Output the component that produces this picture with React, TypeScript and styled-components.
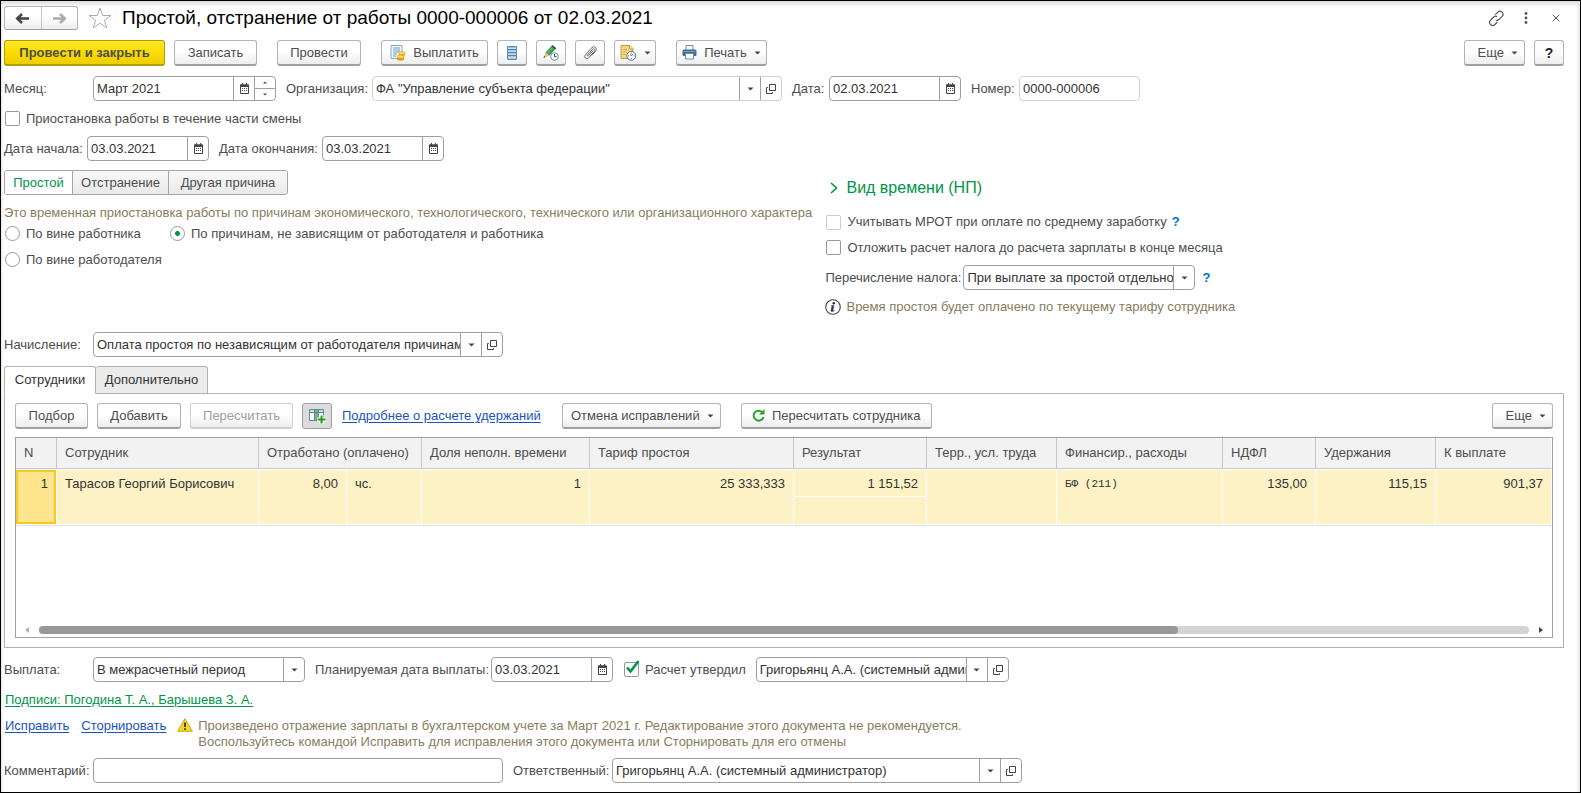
import React from "react";
import styled, { createGlobalStyle, css } from "styled-components";

const GlobalStyle = createGlobalStyle`
  * { box-sizing: border-box; }
  body { margin: 0; background: #fff; }
  body, button, input, select {
    font-family: "Liberation Sans", Arial, sans-serif;
    font-size: 13px;
    line-height: 16px;
    color: #4d4d4d;
  }
`;

const Window = styled.main`
  min-height: 100vh;
  border: 1px solid #000;
  padding: 5px 16px 8px 3px;
  display: flex;
  flex-direction: column;
  background: #fff;
  box-shadow: inset 0 6px 5px -3px #dcdadc, inset -4px 0 4px -3px #e0dee0, inset 3px 0 3px -2px #e6e6e6;
`;

const Row = styled.div<{ $mt?: number; $gap?: number; $h?: number; $top?: boolean }>`
  display: flex;
  align-items: ${(p) => (p.$top ? "flex-start" : "center")};
  margin-top: ${(p) => p.$mt ?? 0}px;
  gap: ${(p) => p.$gap ?? 9}px;
  min-height: ${(p) => p.$h ?? 0}px;
`;

const Spacer = styled.div`
  flex: 1;
`;

const Title = styled.h1`
  margin: 0;
  flex: 1;
  font-size: 19px;
  line-height: 24px;
  font-weight: 400;
  color: #000;
  white-space: nowrap;
`;

const buttonFace = css`
  border: 1px solid #b4b4b4;
  border-bottom: 2px solid #a0a0a0;
  border-radius: 3px;
  background: linear-gradient(#fff, #fff 45%, #ededed);
`;

const NavGroup = styled.div`
  ${buttonFace}
  border-bottom-width: 1px;
  display: flex;
  width: 74px;
  height: 24px;
`;

const NavButton = styled.button`
  flex: 1;
  padding: 0;
  border: 0;
  background: none;
  display: flex;
  align-items: center;
  justify-content: center;
  & + & { border-left: 1px solid #c8c8c8; }
`;

const GhostButton = styled.button<{ $w: number }>`
  width: ${(p) => p.$w}px;
  height: 24px;
  padding: 0;
  border: 0;
  background: none;
  display: flex;
  align-items: center;
  justify-content: center;
  svg { flex: none; }
`;

const Button = styled.button<{ $w: number; $ml?: number; $primary?: boolean; $pressed?: boolean; $end?: boolean }>`
  ${buttonFace}
  width: ${(p) => p.$w}px;
  margin-left: ${(p) => p.$ml ?? 0}px;
  height: 26px;
  padding: 0 ${(p) => (p.$end ? 6 : 0)}px 0 0;
  display: flex;
  flex: none;
  align-items: center;
  justify-content: ${(p) => (p.$end ? "flex-end" : "center")};
  gap: 7px;
  white-space: nowrap;
  &:disabled { color: #a0a0a0; border-color: #d0d0d0; }
  ${(p) =>
    p.$primary &&
    css`
      font-weight: 700;
      border-color: #b59d00;
      background: linear-gradient(#ffe92a, #fbdc00 50%, #efce00);
    `}
  ${(p) =>
    p.$pressed &&
    css`
      border: 1px solid #9d9d9d;
      background: #dcdcdc;
    `}
`;

const HelpMark = styled.b`
  font-size: 14px;
  color: #222;
`;

const Label = styled.label<{ $w?: number }>`
  flex: none;
  width: ${(p) => (p.$w ? p.$w + "px" : "auto")};
  white-space: nowrap;
`;

const Field = styled.div<{ $w: number; $light?: boolean }>`
  display: flex;
  flex: none;
  width: ${(p) => p.$w}px;
  height: 25px;
  border: 1px solid ${(p) => (p.$light ? "#d0d0d0" : "#a0a0a0")};
  border-radius: 4px;
  background: #fff;
  overflow: hidden;
`;

const TextInput = styled.input`
  flex: 1;
  min-width: 0;
  padding: 0 0 0 3px;
  border: 0;
  outline: 0;
  background: none;
  color: #333;
`;

const FieldButton = styled.button`
  width: 21px;
  flex: none;
  padding: 0;
  border: 0;
  border-left: 1px solid #a0a0a0;
  background: none;
  display: flex;
  align-items: center;
  justify-content: center;
`;

const Spinner = styled.div`
  width: 21px;
  flex: none;
  display: flex;
  flex-direction: column;
  border-left: 1px solid #a0a0a0;
`;

const SpinButton = styled.button`
  flex: 1;
  padding: 0;
  border: 0;
  background: none;
  display: flex;
  align-items: center;
  justify-content: center;
  & + & { border-top: 1px solid #a0a0a0; }
`;

const SelectField = styled(Field)`
  display: grid;
  grid-template-columns: 1fr 21px;
`;

const Select = styled.select`
  grid-area: 1 / 1 / 2 / 3;
  appearance: none;
  border: 0;
  outline: 0;
  padding: 0 21px 0 3px;
  background: none;
  color: #333;
`;

const SelectArrow = styled.span`
  grid-area: 1 / 2;
  pointer-events: none;
  border-left: 1px solid #a0a0a0;
  display: flex;
  align-items: center;
  justify-content: center;
`;

const Choice = styled.label<{ $w?: number }>`
  display: flex;
  align-items: center;
  gap: 6px;
  height: 15px;
  padding-left: 1px;
  width: ${(p) => (p.$w ? p.$w + "px" : "auto")};
  white-space: nowrap;
`;

const Check = styled.input.attrs({ type: "checkbox" })`
  appearance: none;
  flex: none;
  width: 15px;
  height: 15px;
  margin: 0;
  border: 1px solid #999;
  border-radius: 2px;
  background: #fff;
  &:disabled { border-color: #ccc; }
`;

const CheckBox = styled.span`
  position: relative;
  display: flex;
  svg {
    position: absolute;
    left: 2px;
    top: -2px;
    display: none;
    pointer-events: none;
  }
  input:checked + svg { display: block; }
`;

const Radio = styled.input.attrs({ type: "radio" })`
  appearance: none;
  flex: none;
  width: 15px;
  height: 15px;
  margin: 0;
  border: 1px solid #999;
  border-radius: 50%;
  background: #fff;
  &:checked { background: radial-gradient(circle, #009646 2px, #fff 3px); }
`;

const Columns = styled.section`
  display: grid;
  grid-template-columns: 822fr 739fr;
  margin-top: 9px;
`;

const RightColumn = styled.div`
  padding-top: 8px;
`;

const Segments = styled.div`
  display: flex;
  width: fit-content;
  height: 25px;
  border: 1px solid #a6a6a6;
  border-radius: 3px;
  overflow: hidden;
`;

const Segment = styled.button<{ $active?: boolean; $w: number }>`
  width: ${(p) => p.$w}px;
  padding: 0;
  border: 0;
  background: ${(p) => (p.$active ? "#fff" : "linear-gradient(#f8f8f8, #e9e9e9)")};
  color: ${(p) => (p.$active ? "#009646" : "#4d4d4d")};
  & + & { border-left: 1px solid #a6a6a6; }
`;

const Hint = styled.p<{ $mt?: number }>`
  margin: ${(p) => p.$mt ?? 0}px 0 0;
  color: #877d5c;
  white-space: nowrap;
`;

const GroupToggle = styled.button`
  display: flex;
  align-items: center;
  gap: 8px;
  height: 20px;
  padding: 0 0 0 5px;
  border: 0;
  background: none;
  font-size: 16px;
  line-height: 20px;
  color: #009646;
`;

const HelpLink = styled.a`
  color: #0073c6;
  font-weight: 700;
  text-decoration: none;
`;

const Link = styled.a<{ $green?: boolean }>`
  padding: 0 1px;
  color: ${(p) => (p.$green ? "#009646" : "#1a53c0")};
  text-decoration: underline;
  text-underline-offset: 2px;
  white-space: nowrap;
`;

const Tabs = styled.div`
  display: flex;
  margin-top: 9px;
`;

const Tab = styled.button<{ $active?: boolean; $w: number }>`
  position: relative;
  width: ${(p) => p.$w}px;
  height: 28px;
  margin-bottom: -1px;
  padding: 0;
  border: 1px solid #b0b0b0;
  border-bottom-color: ${(p) => (p.$active ? "#fff" : "#b0b0b0")};
  border-radius: 3px 3px 0 0;
  background: ${(p) => (p.$active ? "#fff" : "#ebebeb")};
  color: #333;
  & + & { border-left: 0; }
`;

const Panel = styled.section`
  border: 1px solid #b0b0b0;
  padding: 9px 10px;
`;

const TableBox = styled.div`
  margin-top: 8px;
  min-height: 201px;
  border: 1px solid #a0a0a0;
  display: flex;
  flex-direction: column;
`;

const Table = styled.table`
  width: 100%;
  table-layout: fixed;
  border-collapse: separate;
  border-spacing: 0;
`;

const HeadCell = styled.th`
  height: 31px;
  padding: 0 8px;
  text-align: left;
  font-weight: 400;
  white-space: nowrap;
  background: #f2f2f2;
  border-right: 1px solid #c6c6cc;
  border-bottom: 1px solid #c6c6cc;
  &:last-child { border-right-color: #fff; }
`;

const Cell = styled.td<{ $right?: boolean; $current?: boolean; $mono?: boolean }>`
  height: 28px;
  padding: 6px 8px 0;
  vertical-align: top;
  text-align: ${(p) => (p.$right ? "right" : "left")};
  white-space: nowrap;
  color: #333;
  background: #fdf1c6;
  border-right: 1px solid #fff;
  border-bottom: 1px solid #fff;
  tr:first-child > & { border-top: 1px solid #fff; }
  ${(p) =>
    p.$mono &&
    css`
      font-family: "Liberation Mono", "Courier New", monospace;
      font-size: 11px;
    `}
  ${(p) =>
    p.$current &&
    css`
      background: #fee48c;
      box-shadow: inset 0 0 0 2px #fbc91c;
    `}
`;

const RowLine = styled.div`
  height: 1px;
  background: #dfe0ec;
`;

const ScrollRow = styled.div`
  margin-top: auto;
  padding: 0 9px 3px;
  display: flex;
  align-items: center;
  gap: 10px;
`;

const ScrollTrack = styled.div`
  flex: 1;
  height: 8px;
  border-radius: 4px;
  background: #d4d4d4;
`;

const ScrollThumb = styled.div`
  width: calc(100% * 13 / 17);
  height: 8px;
  border-radius: 4px;
  background: #989898;
`;

const Caret = () => (
  <svg width="7" height="4" viewBox="0 0 7 4" aria-hidden="true">
    <path d="M0.500 0.500h6L3.500 3.500z" fill="#444" />
  </svg>
);

const SmallCaret = ({ up }: { up?: boolean }) => (
  <svg width="4" height="3" viewBox="0 0 4 3" aria-hidden="true">
    <path d={up ? "M0 2.500h4L2 0.500z" : "M0 0.500h4L2 2.500z"} fill="#444" />
  </svg>
);

const ScrollArrow = ({ left }: { left?: boolean }) => (
  <svg width="4" height="6" viewBox="0 0 4 6" aria-hidden="true">
    <path d={left ? "M4 0v6L0 3z" : "M0 0v6l4-3z"} fill={left ? "#b0b0b0" : "#444"} />
  </svg>
);

const Arrow = ({ right }: { right?: boolean }) => (
  <svg width="15" height="11" viewBox="0 0 15 11" aria-hidden="true">
    <path
      d={right ? "M1 5.500h11M8 1l4.800 4.500L8 10" : "M14 5.500H3M7 1L2.200 5.500L7 10"}
      fill="none"
      stroke={right ? "#aaa" : "#444"}
      strokeWidth="2.500"
    />
  </svg>
);

const Star = () => (
  <svg width="24" height="22" viewBox="0 0 24 22" aria-hidden="true">
    <path
      d="M12 1l2.700 7.500h8.300l-6.600 4.900 2.500 7.600-6.900-4.700-6.900 4.700 2.500-7.600L1 8.500h8.300z"
      fill="#fff"
      stroke="#a5abb2"
    />
  </svg>
);

const Calendar = () => (
  <svg width="11" height="11" viewBox="0 0 11 11" aria-hidden="true">
    <path d="M1.500 2h8v8.500h-8z" fill="#fff" stroke="#444" />
    <path d="M1 1.500h9V4H1z" fill="#444" />
    <path d="M3.500 0v2M7.500 0v2" stroke="#444" />
    <path d="M3 5.500h1M5 5.500h1M7 5.500h1M3 7.500h1M5 7.500h1M7 7.500h1" stroke="#444" />
  </svg>
);

const OpenIcon = () => (
  <svg width="10" height="10" viewBox="0 0 10 10" aria-hidden="true">
    <path d="M3.500 0.500h6v6h-6zM1.800 3.500H0.500v6h6V8.200" fill="none" stroke="#444" />
  </svg>
);

const LinkIcon = () => (
  <svg width="17" height="17" viewBox="0 0 17 17" fill="none" stroke="#555" strokeWidth="1.200" aria-hidden="true">
    <path d="M7.300 4.600l2.500-2.500c1.100-1.100 2.900-1.400 4.300 0s1.200 3.200 0 4.300l-2.900 2.900c-1.200 1.100-2.500 1.200-3.400.7" />
    <path d="M9.300 12l-2.400 2.500c-1.200 1.200-3 1.400-4.400 0s-1.200-3.200 0-4.300l2.900-2.900c1.200-1.200 2.800-1.200 3.600-.4" />
  </svg>
);

const Dots = () => (
  <svg width="4" height="12" viewBox="0 0 4 12" fill="#555" aria-hidden="true">
    <circle cx="2" cy="1.500" r="1.400" />
    <circle cx="2" cy="6" r="1.400" />
    <circle cx="2" cy="10.500" r="1.400" />
  </svg>
);

const Close = () => (
  <svg width="8" height="8" viewBox="0 0 8 8" aria-hidden="true">
    <path d="M0.700 0.700l6.600 6.600M7.300 0.700L0.700 7.300" stroke="#555" />
  </svg>
);

const PayIcon = () => (
  <svg width="16" height="16" viewBox="0 0 16 16" aria-hidden="true">
    <path d="M1 0.500h11v13H1z" fill="#f4f9fd" stroke="#8ba8c0" />
    <path d="M3 3h7M3 5h7M3 7h7M3 9h4M3 11h3" stroke="#6f9cc4" />
    <path d="M9 8v2.500c0 1 6 1 6 0V8z" fill="#efb820" />
    <path d="M7 11.500v3c0 1.500 7 1.500 7 0v-3z" fill="#e0a010" />
    <ellipse cx="12" cy="8" rx="3.200" ry="1.500" fill="#ffe070" stroke="#d39a10" strokeWidth=".6" />
    <ellipse cx="10.500" cy="11.500" rx="3.500" ry="1.500" fill="#ffe070" stroke="#d39a10" strokeWidth=".6" />
  </svg>
);

const ListIcon = () => (
  <svg width="10" height="14" viewBox="0 0 10 14" aria-hidden="true">
    <path d="M0.500 0.500h9v13h-9z" fill="#9fc0da" stroke="#5f8db0" />
    <path d="M1 3.500h8M1 6.500h8M1 9.500h8" stroke="#4c82ad" />
    <path d="M1 2.500h8M1 5.500h8M1 8.500h8M1 11.500h8" stroke="#cfe2f0" />
  </svg>
);

const PencilClock = () => (
  <svg width="16" height="16" viewBox="0 0 16 16" aria-hidden="true">
    <path d="M0.500 13l2-5.500 3.800 3.200z" fill="#efc48a" />
    <path d="M0.500 13l.7-2 1.300 1.100z" fill="#333" />
    <path d="M2.500 7.500L8 1.500l4 3.300-5.700 5.900z" fill="#3f9f4d" />
    <path d="M8 1.500L9.500 0l4 3.200L12 4.800z" fill="#335c3c" />
    <path d="M4.300 8.300l5-5.400" stroke="#7ccb83" />
    <circle cx="11.500" cy="11.500" r="3.800" fill="#fff" stroke="#78909f" />
    <path d="M11.500 9v2.700h2.200" fill="none" stroke="#345" />
  </svg>
);

const Clip = () => (
  <svg width="14" height="14" viewBox="0 0 14 14" fill="none" stroke="#666" aria-hidden="true">
    <path d="M10.300 4.300L5.500 9.600c-.6.700-1.600 0-1-.8l5-5.500c1.400-1.500 3.500.2 2.100 1.900l-5.900 6.500c-2.200 2.300-5.300-.3-3.300-2.700L8 2.500C9.500.7 11.300.3 12.500 1.500c1.200 1.200.9 2.700-.2 4L8.500 9.600" />
  </svg>
);

const NoteClock = () => (
  <svg width="17" height="16" viewBox="0 0 17 16" aria-hidden="true">
    <path d="M1 0.500h9l3 3v10H1z" fill="#f5d67c" stroke="#c69b3c" />
    <path d="M9.500 0.500v3.500H13" fill="#fff3c8" stroke="#c69b3c" />
    <path d="M3 4.500h4M3 7h4M3 9.500h3" stroke="#dcb04c" />
    <circle cx="11.300" cy="10.800" r="4.500" fill="#fff" stroke="#3e7db4" />
    <path d="M11.300 7.500v1M11.300 13v1M8 10.800h1M13.600 10.800h1" stroke="#d33" />
    <path d="M11.300 10.800l2-1.800M11.300 10.800l-1-1.500" stroke="#334" strokeWidth=".8" />
  </svg>
);

const Printer = () => (
  <svg width="15" height="15" viewBox="0 0 15 15" aria-hidden="true">
    <path d="M4 0.500h7v5H4z" fill="#fff" stroke="#6f8ba3" />
    <rect x="0.500" y="4.500" width="14" height="6.500" rx="1.500" fill="#3b6a93" />
    <path d="M1.500 6.500h12" stroke="#7ba2c2" />
    <path d="M3.500 8.500h8v5.500h-8z" fill="#fff" stroke="#6f8ba3" />
  </svg>
);

const ColumnsIcon = () => (
  <svg width="17" height="16" viewBox="0 0 17 16" aria-hidden="true">
    <path d="M0.500 1.500h14v11H0.500z" fill="#fff" stroke="#5f86a2" />
    <path d="M1 2h13v2.500H1z" fill="#c9dbe8" />
    <path d="M5.500 2h4v10h-4z" fill="#74b765" />
    <path d="M0.500 4.500h14M5.500 1.500v11M9.500 1.500v11" stroke="#5f86a2" />
    <path d="M12.500 6.500v9.500M8 11.500h9" stroke="#fff" strokeWidth="4" />
    <path d="M12.500 7.500v8M8.500 11.500h8" stroke="#2b9a16" strokeWidth="2" />
  </svg>
);

const Refresh = () => (
  <svg width="13" height="13" viewBox="0 0 13 13" aria-hidden="true">
    <path d="M10.300 3.200A5 5 0 1 0 11.500 8" fill="none" stroke="#2aa12a" strokeWidth="2" />
    <path d="M12.500 0v5.500H7z" fill="#2aa12a" />
  </svg>
);

const Chevron = () => (
  <svg width="8" height="12" viewBox="0 0 8 12" aria-hidden="true">
    <path d="M1 1l5.500 5L1 11" fill="none" stroke="#009646" strokeWidth="1.600" />
  </svg>
);

const Info = () => (
  <svg width="16" height="16" viewBox="0 0 16 16" aria-hidden="true">
    <circle cx="8" cy="8" r="7.300" fill="#fff" stroke="#444" strokeWidth="1.100" />
    <circle cx="8.800" cy="4.200" r="1.300" fill="#333" />
    <path d="M6.200 6.600h2.900l-1.200 4.600c-.2.800.6.800 1.700 0-1.200 1.800-4.200 2-3.600-.3l.8-3.300z" fill="#333" stroke="#333" strokeWidth=".4" />
  </svg>
);

const Warning = () => (
  <svg width="16" height="14" viewBox="0 0 16 14" aria-hidden="true">
    <path d="M8 0.700L15.300 13.300H0.700z" fill="#f6d822" stroke="#c9ab1a" strokeLinejoin="round" />
    <path d="M8 4.500v4.500M8 10.200v1.700" stroke="#333" strokeWidth="1.800" />
  </svg>
);

const Tick = () => (
  <svg width="15" height="14" viewBox="0 0 15 14" aria-hidden="true">
    <path d="M1 7.500l3.500 4L12.500 1" fill="none" stroke="#009646" strokeWidth="2.600" />
  </svg>
);

const DateField = ({ id, value, w }: { id: string; value: string; w: number }) => (
  <Field $w={w}>
    <TextInput id={id} defaultValue={value} />
    <FieldButton aria-label="Календарь"><Calendar /></FieldButton>
  </Field>
);

const RefField = ({ id, value, w, light, label }: { id: string; value: string; w: number; light?: boolean; label?: string }) => (
  <Field $w={w} $light={light}>
    <TextInput id={id} defaultValue={value} aria-label={label} />
    <FieldButton aria-label="Выбрать"><Caret /></FieldButton>
    <FieldButton aria-label="Открыть"><OpenIcon /></FieldButton>
  </Field>
);

const DropDown = ({ id, value, w }: { id: string; value: string; w: number }) => (
  <SelectField $w={w}>
    <Select id={id}><option>{value}</option></Select>
    <SelectArrow><Caret /></SelectArrow>
  </SelectField>
);

const columnWidths = [41, 202, 88, 75, 168, 204, 133, 130, 166, 93, 120, 116];

export default function App() {
  return (
    <>
      <GlobalStyle />
      <Window>
        <Row $h={24} $gap={10}>
          <NavGroup>
            <NavButton aria-label="Назад"><Arrow /></NavButton>
            <NavButton aria-label="Вперед"><Arrow right /></NavButton>
          </NavGroup>
          <GhostButton $w={24} aria-label="В избранное"><Star /></GhostButton>
          <Title>Простой, отстранение от работы 0000-000006 от 02.03.2021</Title>
          <Row $gap={14}>
            <GhostButton $w={16} aria-label="Ссылка"><LinkIcon /></GhostButton>
            <GhostButton $w={16} aria-label="Меню"><Dots /></GhostButton>
            <GhostButton $w={16} aria-label="Закрыть"><Close /></GhostButton>
          </Row>
        </Row>

        <Row $mt={10}>
          <Button $w={161} $primary>Провести и закрыть</Button>
          <Button $w={83}>Записать</Button>
          <Button $w={84} $ml={11}>Провести</Button>
          <Button $w={107} $ml={11}><PayIcon />Выплатить</Button>
          <Button $w={30} aria-label="Список"><ListIcon /></Button>
          <Button $w={30} aria-label="Правка"><PencilClock /></Button>
          <Button $w={30} aria-label="Файлы"><Clip /></Button>
          <Button $w={42} aria-label="Напоминание"><NoteClock /><Caret /></Button>
          <Button $w={91} $ml={11}><Printer />Печать<Caret /></Button>
          <Spacer />
          <Button $w={61} $end>Еще<Caret /></Button>
          <Button $w={30} aria-label="Справка"><HelpMark>?</HelpMark></Button>
        </Row>

        <Row $mt={10} $gap={10}>
          <Row $gap={0}>
            <Label $w={89} htmlFor="month">Месяц:</Label>
            <Field $w={183}>
              <TextInput id="month" defaultValue="Март 2021" />
              <FieldButton aria-label="Календарь"><Calendar /></FieldButton>
              <Spinner>
                <SpinButton aria-label="Больше"><SmallCaret up /></SpinButton>
                <SpinButton aria-label="Меньше"><SmallCaret /></SpinButton>
              </Spinner>
            </Field>
          </Row>
          <Row $gap={0}>
            <Label $w={86} htmlFor="org">Организация:</Label>
            <RefField id="org" value={'ФА "Управление субъекта федерации"'} w={410} light />
          </Row>
          <Row $gap={0}>
            <Label $w={37} htmlFor="date">Дата:</Label>
            <DateField id="date" value="02.03.2021" w={132} />
          </Row>
          <Row $gap={0}>
            <Label $w={48} htmlFor="number">Номер:</Label>
            <Field $w={121} $light><TextInput id="number" defaultValue="0000-000006" /></Field>
          </Row>
        </Row>

        <Row $mt={10}>
          <Choice><Check />Приостановка работы в течение части смены</Choice>
        </Row>

        <Row $mt={10} $gap={10}>
          <Row $gap={0}>
            <Label $w={83} htmlFor="from">Дата начала:</Label>
            <DateField id="from" value="03.03.2021" w={122} />
          </Row>
          <Row $gap={0}>
            <Label $w={103} htmlFor="to">Дата окончания:</Label>
            <DateField id="to" value="03.03.2021" w={122} />
          </Row>
        </Row>

        <Columns>
          <div>
            <Segments>
              <Segment $w={67} $active>Простой</Segment>
              <Segment $w={96}>Отстранение</Segment>
              <Segment $w={119}>Другая причина</Segment>
            </Segments>
            <Hint $mt={10}>
              Это временная приостановка работы по причинам экономического, технологического, технического или организационного характера
            </Hint>
            <Row $mt={5} $gap={0}>
              <Choice $w={165}><Radio name="fault" />По вине работника</Choice>
              <Choice><Radio name="fault" defaultChecked />По причинам, не зависящим от работодателя и работника</Choice>
            </Row>
            <Row $mt={11}>
              <Choice><Radio name="fault" />По вине работодателя</Choice>
            </Row>
          </div>
          <RightColumn>
            <GroupToggle><Chevron />Вид времени (НП)</GroupToggle>
            <Row $mt={16} $gap={5}>
              <Choice><Check disabled />Учитывать МРОТ при оплате по среднему заработку</Choice>
              <HelpLink href="#">?</HelpLink>
            </Row>
            <Row $mt={10}>
              <Choice><Check />Отложить расчет налога до расчета зарплаты в конце месяца</Choice>
            </Row>
            <Row $mt={10} $gap={7}>
              <Row $gap={0}>
                <Label $w={138} htmlFor="tax">Перечисление налога:</Label>
                <DropDown id="tax" value="При выплате за простой отдельно" w={232} />
              </Row>
              <HelpLink href="#">?</HelpLink>
            </Row>
            <Row $mt={9} $gap={5}>
              <Info />
              <Hint>Время простоя будет оплачено по текущему тарифу сотрудника</Hint>
            </Row>
          </RightColumn>
        </Columns>

        <Row $mt={17} $gap={0}>
          <Label $w={89} htmlFor="accrual">Начисление:</Label>
          <RefField id="accrual" value="Оплата простоя по независящим от работодателя причинам" w={410} />
        </Row>

        <Tabs>
          <Tab $w={92} $active>Сотрудники</Tab>
          <Tab $w={112}>Дополнительно</Tab>
        </Tabs>
        <Panel>
          <Row>
            <Button $w={73}>Подбор</Button>
            <Button $w={84}>Добавить</Button>
            <Button $w={103} disabled>Пересчитать</Button>
            <Button $w={30} $pressed aria-label="Колонки"><ColumnsIcon /></Button>
            <Link href="#">Подробнее о расчете удержаний</Link>
            <Button $w={159} $ml={11} $end>Отмена исправлений<Caret /></Button>
            <Button $w={191} $ml={11}><Refresh />Пересчитать сотрудника</Button>
            <Spacer />
            <Button $w={61} $end>Еще<Caret /></Button>
          </Row>
          <TableBox>
            <Table>
              <colgroup>
                {columnWidths.map((w, i) => <col key={i} style={{ width: w }} />)}
              </colgroup>
              <thead>
                <tr>
                  <HeadCell>N</HeadCell>
                  <HeadCell>Сотрудник</HeadCell>
                  <HeadCell colSpan={2}>Отработано (оплачено)</HeadCell>
                  <HeadCell>Доля неполн. времени</HeadCell>
                  <HeadCell>Тариф простоя</HeadCell>
                  <HeadCell>Результат</HeadCell>
                  <HeadCell>Терр., усл. труда</HeadCell>
                  <HeadCell>Финансир., расходы</HeadCell>
                  <HeadCell>НДФЛ</HeadCell>
                  <HeadCell>Удержания</HeadCell>
                  <HeadCell>К выплате</HeadCell>
                </tr>
              </thead>
              <tbody>
                <tr>
                  <Cell rowSpan={2} $right $current>1</Cell>
                  <Cell rowSpan={2}>Тарасов Георгий Борисович</Cell>
                  <Cell rowSpan={2} $right>8,00</Cell>
                  <Cell rowSpan={2}>чс.</Cell>
                  <Cell rowSpan={2} $right>1</Cell>
                  <Cell rowSpan={2} $right>25 333,333</Cell>
                  <Cell $right>1 151,52</Cell>
                  <Cell rowSpan={2} />
                  <Cell rowSpan={2} $mono>БФ (211)</Cell>
                  <Cell rowSpan={2} $right>135,00</Cell>
                  <Cell rowSpan={2} $right>115,15</Cell>
                  <Cell rowSpan={2} $right>901,37</Cell>
                </tr>
                <tr>
                  <Cell />
                </tr>
              </tbody>
            </Table>
            <RowLine />
            <ScrollRow>
              <ScrollArrow left />
              <ScrollTrack><ScrollThumb /></ScrollTrack>
              <ScrollArrow />
            </ScrollRow>
          </TableBox>
        </Panel>

        <Row $mt={9} $gap={10}>
          <Row $gap={0}>
            <Label $w={89} htmlFor="payout">Выплата:</Label>
            <DropDown id="payout" value="В межрасчетный период" w={212} />
          </Row>
          <Row $gap={0}>
            <Label $w={176} htmlFor="planned">Планируемая дата выплаты:</Label>
            <DateField id="planned" value="03.03.2021" w={122} />
          </Row>
          <Choice>
            <CheckBox><Check defaultChecked /><Tick /></CheckBox>
            Расчет утвердил
          </Choice>
          <RefField id="approver" label="Утвердил" value="Григорьянц А.А. (системный администратор)" w={253} />
        </Row>

        <Row $mt={10}>
          <Link href="#" $green>Подписи: Погодина Т. А., Барышева З. А.</Link>
        </Row>

        <Row $mt={10} $gap={10} $top>
          <Link href="#">Исправить</Link>
          <Link href="#">Сторнировать</Link>
          <Row $gap={5} $top>
            <Warning />
            <Hint>
              Произведено отражение зарплаты в бухгалтерском учете за Март 2021 г. Редактирование этого документа не рекомендуется.
              <br />
              Воспользуйтесь командой Исправить для исправления этого документа или Сторнировать для его отмены
            </Hint>
          </Row>
        </Row>

        <Row $mt={8} $gap={10}>
          <Row $gap={0}>
            <Label $w={89} htmlFor="comment">Комментарий:</Label>
            <Field $w={410}><TextInput id="comment" /></Field>
          </Row>
          <Row $gap={0}>
            <Label $w={99} htmlFor="responsible">Ответственный:</Label>
            <RefField id="responsible" value="Григорьянц А.А. (системный администратор)" w={410} />
          </Row>
        </Row>
      </Window>
    </>
  );
}
